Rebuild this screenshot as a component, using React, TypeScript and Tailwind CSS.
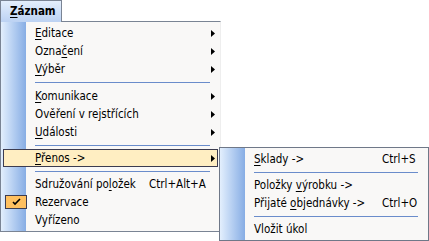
import React from 'react';

type Item =
    | { kind: 'sep'; tall?: boolean }
    | {
          kind: 'item';
          label: React.ReactNode;
          shortcut?: string;
          submenu?: boolean;
          active?: boolean;
          checked?: boolean;
      };

const u = (c: string) => <span className="underline underline-offset-2">{c}</span>;

const mainItems: Item[] = [
    { kind: 'item', label: <>{u('E')}ditace</>, submenu: true },
    { kind: 'item', label: <>Ozna{u('č')}ení</>, submenu: true },
    { kind: 'item', label: <>{u('V')}ýběr</>, submenu: true },
    { kind: 'sep', tall: true },
    { kind: 'item', label: <>{u('K')}omunikace</>, submenu: true },
    { kind: 'item', label: 'Ověření v rejstřících', submenu: true },
    { kind: 'item', label: <>{u('U')}dálosti</>, submenu: true },
    { kind: 'sep' },
    { kind: 'item', label: <>{u('P')}řenos -&gt;</>, submenu: true, active: true },
    { kind: 'sep' },
    { kind: 'item', label: <>Sdružování po{u('l')}ožek</>, shortcut: 'Ctrl+Alt+A' },
    { kind: 'item', label: 'Rezervace', checked: true },
    { kind: 'item', label: 'Vyřízeno' },
];

const subItems: Item[] = [
    { kind: 'item', label: <>{u('S')}klady -&gt;</>, shortcut: 'Ctrl+S' },
    { kind: 'sep' },
    { kind: 'item', label: <>Položky {u('v')}ýrobku -&gt;</> },
    { kind: 'item', label: <>Přijaté {u('o')}bjednávky -&gt;</>, shortcut: 'Ctrl+O' },
    { kind: 'sep' },
    { kind: 'item', label: 'Vložit úkol' },
];

const Arrow = () => (
    <svg width="4" height="7" viewBox="0 0 4 7" className="block">
        <path d="M0 0 L4 3.5 L0 7 Z" fill="#000" />
    </svg>
);

const Check = () => (
    <svg width="9" height="8" viewBox="0 0 9 8" className="block">
        <path d="M1 4 L3 6 L8 1" stroke="#000" strokeWidth="1.6" fill="none" />
    </svg>
);

const MenuRows: React.FC<{ items: Item[]; labelWidth: string }> = ({ items, labelWidth }) => (
    <div className="relative flex flex-col py-[2px]">
        {items.map((it, i) =>
            it.kind === 'sep' ? (
                <div
                    key={i}
                    className={`flex ${it.tall ? 'h-[9px]' : 'h-[8px]'} items-center pl-[34px] pr-[10px]`}
                >
                    <div className="h-px w-full bg-[#6a8ccb]" />
                </div>
            ) : (
                <div
                    key={i}
                    className={`relative mx-[2px] flex h-[18px] items-center border ${
                        it.active ? 'border-[#3c3c50] bg-[#ffeec2]' : 'border-transparent'
                    }`}
                >
                    {it.checked && (
                        <div className="absolute left-[1px] top-[1px] flex h-[14px] w-[22px] items-center justify-center border border-[#3c3c50] bg-[#ffc060]">
                            <Check />
                        </div>
                    )}
                    <span className={`${labelWidth} shrink-0 whitespace-nowrap pl-[31px] pt-px`}>{it.label}</span>
                    {it.shortcut && <span className="whitespace-nowrap pt-px">{it.shortcut}</span>}
                    {it.submenu && (
                        <span className="ml-auto pr-[2px]">
                            <Arrow />
                        </span>
                    )}
                </div>
            ),
        )}
    </div>
);

export default function App() {
    return (
        <div
            className="relative h-[241px] w-[429px] overflow-hidden bg-white text-[11.5px] leading-none text-black"
            style={{ fontFamily: '"DejaVu Sans Condensed", "DejaVu Sans", sans-serif' }}
        >
            <div className="relative z-10 flex h-[22px] w-[62px] items-center border-x border-t border-[#7a8494] bg-gradient-to-b from-[#e3eefc] to-[#bcd2f3] pl-[9px] font-bold">
                {u('Z')}áznam
            </div>
            <div className="relative -mt-px w-[221px] border border-r-[#eeeeee] border-[#7a8494] bg-[#f9f8f7]">
                <div className="absolute bottom-0 left-0 top-0 w-[25px] bg-gradient-to-r from-[#e3effd] to-[#87ade4]" />
                <MenuRows items={mainItems} labelWidth="w-[145px]" />
            </div>

            {/* submenu */}
            <div className="absolute left-[219px] top-[147px] w-[210px] border border-[#6f7888] bg-[#f9f8f7]">
                <div className="absolute bottom-0 left-0 top-0 w-[25px] bg-gradient-to-r from-[#e3effd] to-[#87ade4]" />
                <MenuRows items={subItems} labelWidth="w-[159px]" />
            </div>
        </div>
    );
}
